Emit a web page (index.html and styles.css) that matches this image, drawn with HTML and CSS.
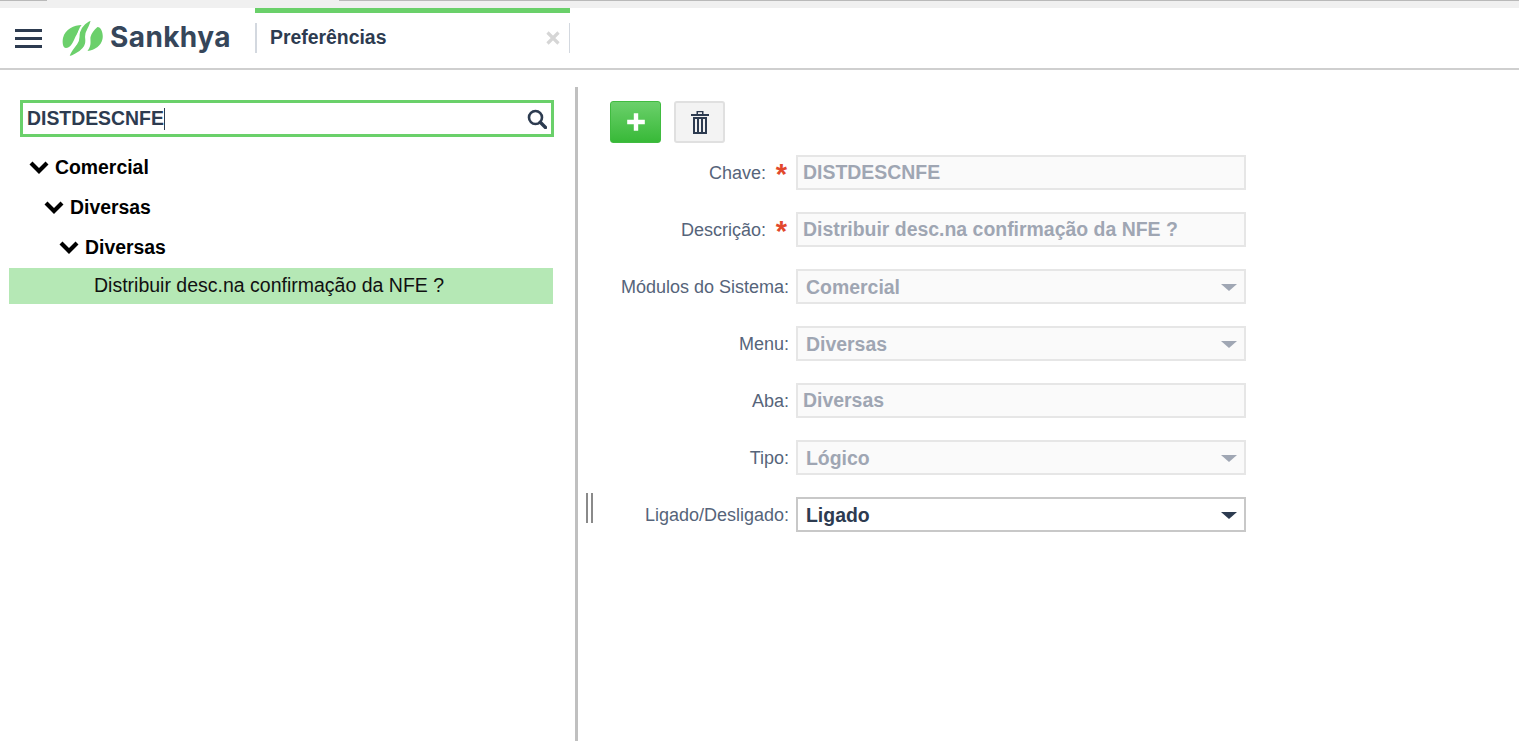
FILE: index.html
```html
<!DOCTYPE html>
<html lang="pt-BR">
<head>
<meta charset="utf-8">
<title>Preferências</title>
<link rel="stylesheet" href="styles.css">
</head>
<body>
<div class="topstrip"><span class="ts-line ts-a"></span><span class="ts-gap"></span><span class="ts-line ts-b"></span></div>
<header class="header">
  <button class="burger" aria-label="Menu"><span></span><span></span><span></span></button>
  <div class="logo">
    <svg class="logo-mark" viewBox="0 0 42 38" width="42" height="38">
      <path fill="#6bd06b" d="M21 6 C13 6 4 10 2 19 C1 24 2 29 5 29 C9 29 11 25 13 21 C14.500 17 18 12 21 6Z"/>
      <path fill="#6bd06b" d="M36.500 8 C33 11 30.500 14 29.500 18 C29 22 31 26 26.500 32 C34 31 40 27 41.500 20 C42.500 15 40.500 8 36.500 8Z"/>
      <path fill="#6bd06b" stroke="#fff" stroke-width="2.200" d="M31 0 C26 1.500 20 6 18 13 C16.500 18 19 20 15 25 C13 28 9 32 7.500 37 C9 39 11 38 14 36 C18 33.500 23.500 31.500 25 25 C26.500 20 23.500 17 26.500 12 C28 9 30.500 5 31 0Z"/>
    </svg>
    <span class="logo-text">Sankhya</span>
  </div>
  <div class="tab">
    <span class="tab-title">Preferências</span>
    <span class="tab-close"><svg viewBox="0 0 14 14" width="14" height="14"><path d="M1.500 1.500 L12.500 12.500 M12.500 1.500 L1.500 12.500" stroke="#d6d6d6" stroke-width="3.200"/></svg></span>
  </div>
</header>
<main class="main">
  <section class="left">
    <div class="search">
      <span class="search-value">DISTDESCNFE</span><span class="caret"></span>
      <svg class="search-icon" viewBox="0 0 20 20" width="20" height="20"><circle cx="8.500" cy="8.500" r="6.500" fill="none" stroke="#2d3b50" stroke-width="2.600"/><path d="M13.300 13.300 L18.500 18.500" stroke="#2d3b50" stroke-width="3.400" stroke-linecap="round"/></svg>
    </div>
    <ul class="tree">
      <li class="node lvl1"><svg class="chev" viewBox="0 0 20 14" width="20" height="14"><path d="M2 3 L10 11 L18 3" fill="none" stroke="#000" stroke-width="4.200"/></svg>Comercial</li>
      <li class="node lvl2"><svg class="chev" viewBox="0 0 20 14" width="20" height="14"><path d="M2 3 L10 11 L18 3" fill="none" stroke="#000" stroke-width="4.200"/></svg>Diversas</li>
      <li class="node lvl3"><svg class="chev" viewBox="0 0 20 14" width="20" height="14"><path d="M2 3 L10 11 L18 3" fill="none" stroke="#000" stroke-width="4.200"/></svg>Diversas</li>
      <li class="leaf">Distribuir desc.na confirmação da NFE ?</li>
    </ul>
  </section>
  <div class="divider"></div>
  <section class="right">
    <div class="grip"></div>
    <div class="toolbar">
      <button class="btn btn-add" aria-label="Adicionar"><svg viewBox="0 0 20 20" width="22" height="22"><path d="M10 2 V18 M2 10 H18" stroke="#fff" stroke-width="4"/></svg></button>
      <button class="btn btn-del" aria-label="Excluir"><svg viewBox="0 0 18 23" width="18" height="23"><path fill="#2d3b50" d="M5.500 0 H12.500 V3 H18 V5 H0 V3 H5.500 Z M7 1.200 V3 H11 V1.200 Z"/><path fill="#2d3b50" fill-rule="evenodd" d="M2 6 H16 V23 H2 Z M4 8 V21 H6 V8 Z M8 8 V21 H10 V8 Z M12 8 V21 H14 V8 Z"/></svg></button>
    </div>
    <form class="form">
      <div class="row"><label class="lbl req">Chave:<span class="star">*</span></label><div class="field ro">DISTDESCNFE</div></div>
      <div class="row"><label class="lbl req">Descrição:<span class="star">*</span></label><div class="field ro">Distribuir desc.na confirmação da NFE ?</div></div>
      <div class="row"><label class="lbl">Módulos do Sistema:</label><div class="field ro sel">Comercial<i class="arrow"></i></div></div>
      <div class="row"><label class="lbl">Menu:</label><div class="field ro sel">Diversas<i class="arrow"></i></div></div>
      <div class="row"><label class="lbl">Aba:</label><div class="field ro">Diversas</div></div>
      <div class="row"><label class="lbl">Tipo:</label><div class="field ro sel">Lógico<i class="arrow"></i></div></div>
      <div class="row"><label class="lbl">Ligado/Desligado:</label><div class="field sel active">Ligado<i class="arrow"></i></div></div>
    </form>
  </section>
</main>
</body>
</html>
```
FILE: styles.css
```css
* { box-sizing: border-box; }
html, body { margin: 0; height: 100%; overflow: hidden; }
body { background: #fff; font-family: "Liberation Sans", Arial, sans-serif; color: #2d3b50; }

.topstrip { height: 8px; background: #f0f0f0; display: flex; align-items: flex-start; }
.ts-line { height: 1px; background: #b9b9b9; }
.ts-a { width: 47px; }
.ts-gap { width: 292px; }
.ts-b { flex: 1; }

.header { height: 62px; border-bottom: 2px solid #cfcfcf; display: flex; align-items: stretch; background: #fff; }
.burger { width: 27px; margin: 21px 0 0 15px; padding: 0; height: 19px; background: none; border: 0; display: flex; flex-direction: column; justify-content: space-between; }
.burger span { display: block; height: 3px; background: #2d3b50; }
.logo { margin-left: 19px; width: 194px; display: flex; align-items: center; gap: 7px; }
.logo-mark { flex: none; }
.logo-text { font-family: "Inter", sans-serif; font-weight: 700; font-size: 28px; letter-spacing: .4px; line-height: 1; margin-top: -3px; color: #36465a; }
.tab { width: 315px; border-top: 5px solid #6ad06a; display: flex; align-items: center; padding: 0 0 6px; }
.tab-title { flex: 1; border-left: 2px solid #d3d8df; height: 30px; line-height: 29px; padding-left: 13px; font-weight: 700; font-size: 19.4px; color: #2d3b50; }
.tab-close { display: flex; align-items: center; width: 24px; height: 30px; border-right: 1px solid #d3d8df; }

.main { height: 671px; display: flex; }
.left { width: 575px; flex: none; padding: 30px 22px 0 9px; }
.search { margin: 0 -1px 0 11px; height: 37px; border: 3px solid #6ad06a; display: flex; align-items: center; padding: 0 4px; }
.search-value { font-weight: 700; font-size: 19.4px; color: #2d3b50; }
.caret { width: 1px; height: 22px; background: #2d3b50; }
.search-icon { margin-left: auto; flex: none; }
.tree { list-style: none; margin: 10px 0 0; padding: 0; }
.node { height: 40px; display: flex; align-items: center; gap: 6px; font-weight: 700; font-size: 19.4px; color: #000; }
.lvl1 { padding-left: 20px; }
.lvl2 { padding-left: 35px; }
.lvl3 { padding-left: 50px; }
.chev { flex: none; }
.leaf { height: 36px; margin-top: 1px; background: #b5e8b5; padding-left: 85px; line-height: 34px; font-size: 19.5px; color: #111; }

.divider { width: 3px; height: 654px; margin-top: 17px; background: #c0c0c0; flex: none; }
.right { flex: 1; position: relative; padding: 31px 0 0 32px; }
.grip { position: absolute; left: 8px; top: 423px; width: 7px; height: 30px; border-left: 2px solid #8a8a8a; border-right: 2px solid #8a8a8a; }
.toolbar { display: flex; gap: 13px; height: 54px; }
.btn { width: 51px; height: 42px; border-radius: 3px; padding: 0; display: flex; align-items: center; justify-content: center; }
.btn-add { background: linear-gradient(#6bd06b, #38b938); border: 1px solid #40bb40; }
.btn-del { background: #f3f3f3; border: 2px solid #e0e0e0; }

.form { display: flex; flex-direction: column; gap: 22px; }
.row { display: flex; align-items: center; height: 35px; width: 636px; }
.lbl { width: 186px; flex: none; padding: 2px 7px 0 0; text-align: right; font-size: 18px; color: #56647a; position: relative; }
.lbl.req { padding-right: 30px; }
.star { position: absolute; right: 9px; top: -2px; color: #e2482d; font-size: 29px; line-height: 30px; font-weight: 700; }
.field { width: 450px; height: 35px; border: 2px solid #e6e6e6; background: #fafafa; padding: 0 5px; line-height: 31px; font-weight: 700; font-size: 19.45px; color: #9fa6b3; position: relative; flex: none; }
.sel { padding-left: 8px; line-height: 33px; }
.active { background: #fff; color: #2d3b50; border-color: #c8c8c8; }
.arrow { position: absolute; right: 7px; top: 13px; width: 0; height: 0; border-left: 8px solid transparent; border-right: 8px solid transparent; border-top: 7px solid #a0a7b4; }
.active .arrow { border-top-color: #2d3b50; }
```
